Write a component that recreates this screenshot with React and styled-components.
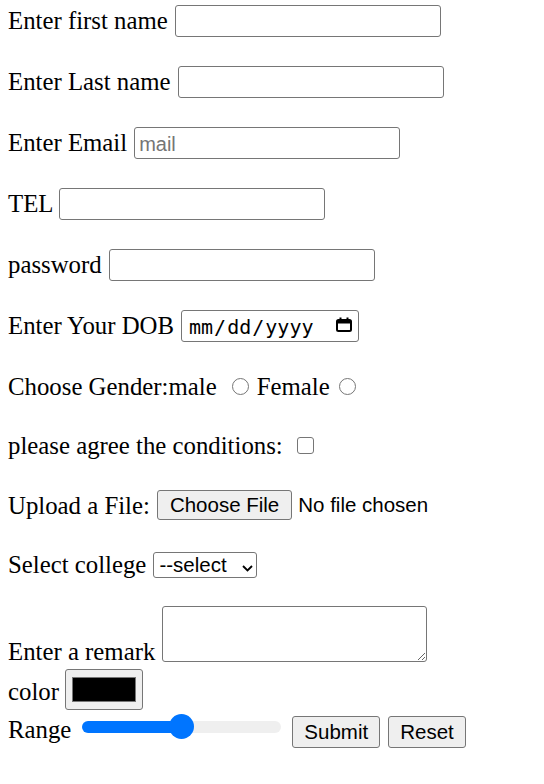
import React from 'react'
import styled, { createGlobalStyle } from 'styled-components'

const Page = createGlobalStyle`
  html, body {
    margin: 0;
    background: #fff;
  }
  body {
    font-family: "Liberation Serif", "Times New Roman", serif;
    color: #000;
  }
`

const Form = styled.form`
  display: flex;
  flex-direction: column;
  align-items: flex-start;
  padding: 5px 8px 0;
`

const Row = styled.div`
  display: flex;
  align-items: ${p => p.$align || 'baseline'};
  gap: ${p => p.$gap ?? 7}px;
  margin-top: ${p => p.$mt ?? 0}px;
`

const Label = styled.label`
  font-size: 24.8px;
  line-height: normal;
  white-space: nowrap;
  margin-bottom: ${p => p.$mb || 0}px;
`

const TextInput = styled.input`
  box-sizing: border-box;
  width: 266px;
  height: 32px;
  margin: 0;
  padding: 2px 4px 0;
  border: 1px solid #767676;
  border-radius: 3px;
  background: #fff;
  color: #000;
  font: 20px "Liberation Sans", Arial, sans-serif;
  outline: none;
  &::placeholder {
    color: #757575;
  }
`

const DateWrap = styled.div`
  position: relative;
  display: flex;
`

const DateInput = styled(TextInput)`
  width: 178px;
  padding: 2px 6px 0 6px;
  font-family: "DejaVu Sans Mono", "Liberation Mono", monospace;
  &::-webkit-calendar-picker-indicator {
    width: 16px;
    height: 16px;
    padding: 0;
    margin: 0;
    opacity: 0;
  }
`

const CalendarIcon = styled.svg`
  position: absolute;
  right: 7px;
  top: 7px;
  pointer-events: none;
`

const Radio = styled.input`
  appearance: none;
  box-sizing: border-box;
  align-self: flex-start;
  width: 17px;
  height: 17px;
  margin: 5px ${p => p.$mr || 0}px 0 ${p => p.$ml || 0}px;
  border: 1px solid #767676;
  border-radius: 50%;
  background: #fff;
`

const Checkbox = styled.input`
  appearance: none;
  box-sizing: border-box;
  align-self: flex-start;
  width: 17px;
  height: 17px;
  margin: 5px 0 0;
  border: 1px solid #767676;
  border-radius: 3px;
  background: #fff;
`

const FileInput = styled.input`
  align-self: flex-start;
  width: 290px;
  height: 30px;
  margin: -2px 0 0;
  padding: 0;
  color: #000;
  font: 20.5px "Liberation Sans", Arial, sans-serif;
  &::file-selector-button {
    box-sizing: border-box;
    height: 30px;
    margin: 0 6px 0 0;
    padding: 0 12px;
    border: 1px solid #767676;
    border-radius: 3px;
    background: #efefef;
    color: #000;
    font: inherit;
  }
`

const SelectWrap = styled.div`
  position: relative;
  align-self: flex-start;
  margin-top: 1px;
`

const Select = styled.select`
  appearance: none;
  box-sizing: border-box;
  width: 104px;
  height: 26px;
  margin: 0;
  padding: 0 22px 0 5px;
  border: 1px solid #767676;
  border-radius: 3px;
  background: #fff;
  color: #000;
  font: 20.5px "Liberation Sans", Arial, sans-serif;
`

const Chevron = styled.svg`
  position: absolute;
  right: 4px;
  top: 13px;
  pointer-events: none;
`

const TextArea = styled.textarea`
  box-sizing: border-box;
  width: 265px;
  height: 56px;
  margin: 0 0 4.4px;
  border: 1px solid #767676;
  border-radius: 3px;
  font: 20px "Liberation Mono", monospace;
`

const ColorInput = styled.input`
  box-sizing: border-box;
  width: 78px;
  height: 41px;
  margin: 0;
  padding: 0;
  border: 1px solid #767676;
  border-radius: 3px;
  background: #efefef;
  &::-webkit-color-swatch-wrapper {
    padding: 7px 6px;
  }
  &::-webkit-color-swatch {
    border: 1px solid #777;
    border-radius: 0;
  }
`

const Slider = styled.input`
  -webkit-appearance: none;
  appearance: none;
  width: 199px;
  height: 25px;
  margin: -2px 3px 0;
  background: transparent;
  &::-webkit-slider-runnable-track {
    height: 12px;
    border-radius: 6px;
    background: linear-gradient(to right, #0075ff ${p => p.$pct}%, #efefef ${p => p.$pct}%);
  }
  &::-webkit-slider-thumb {
    -webkit-appearance: none;
    width: 25px;
    height: 25px;
    margin-top: -6.5px;
    border: none;
    border-radius: 50%;
    background: #0075ff;
  }
`

const Button = styled.button`
  box-sizing: border-box;
  height: 32px;
  margin: 0;
  padding: 0 11px;
  border: 1px solid #767676;
  border-radius: 3px;
  background: #efefef;
  color: #000;
  font: 20.5px "Liberation Sans", Arial, sans-serif;
`

export default function App() {
  return (
    <>
      <Page />
      <Form>
        <Row>
          <Label htmlFor="fname">Enter first name</Label>
          <TextInput id="fname" type="text" />
        </Row>
        <Row $mt={29}>
          <Label htmlFor="lname">Enter Last name</Label>
          <TextInput id="lname" type="text" />
        </Row>
        <Row $mt={29}>
          <Label htmlFor="email">Enter Email</Label>
          <TextInput id="email" type="email" placeholder="mail" />
        </Row>
        <Row $mt={29} $gap={6}>
          <Label htmlFor="tel">TEL</Label>
          <TextInput id="tel" type="tel" />
        </Row>
        <Row $mt={29}>
          <Label htmlFor="pwd">password</Label>
          <TextInput id="pwd" type="password" />
        </Row>
        <Row $mt={29} $gap={7}>
          <Label htmlFor="dob">Enter Your DOB</Label>
          <DateWrap>
            <DateInput id="dob" type="date" />
            <CalendarIcon width="16" height="15" viewBox="0 0 16 15">
              <rect x="1" y="3" width="14" height="11" rx="1.5" fill="none" stroke="#000" strokeWidth="2" />
              <rect x="1" y="3" width="14" height="3.5" fill="#000" />
              <rect x="3.5" y="0.5" width="2" height="3" fill="#000" />
              <rect x="10.5" y="0.5" width="2" height="3" fill="#000" />
            </CalendarIcon>
          </DateWrap>
        </Row>
        <Row $mt={31} $gap={0}>
          <Label htmlFor="male">Choose Gender:male</Label>
          <Radio id="male" type="radio" name="gender" $ml={15.5} $mr={7.5} />
          <Label htmlFor="female">Female</Label>
          <Radio id="female" type="radio" name="gender" $ml={9} />
        </Row>
        <Row $mt={30.5} $gap={14}>
          <Label htmlFor="agree">please agree the conditions:</Label>
          <Checkbox id="agree" type="checkbox" />
        </Row>
        <Row $mt={32.5}>
          <Label htmlFor="file">Upload a File:</Label>
          <FileInput id="file" type="file" />
        </Row>
        <Row $mt={30.9}>
          <Label htmlFor="college">Select college</Label>
          <SelectWrap>
            <Select id="college" defaultValue="">
              <option value="">--select</option>
            </Select>
            <Chevron width="11" height="7" viewBox="0 0 11 7">
              <path d="M1 1l4.5 4.5L10 1" fill="none" stroke="#000" strokeWidth="1.8" />
            </Chevron>
          </SelectWrap>
        </Row>
        <Row $mt={26.65} $align="flex-end">
          <Label htmlFor="remark">Enter a remark</Label>
          <TextArea id="remark" />
        </Row>
        <Row $mt={2.6} $align="flex-end" $gap={6}>
          <Label htmlFor="color" $mb={3.6}>color</Label>
          <ColorInput id="color" type="color" defaultValue="#000000" />
        </Row>
        <Row $mt={6.9} $align="flex-start" $gap={8}>
          <Label htmlFor="range">Range</Label>
          <Slider id="range" type="range" defaultValue={50} $pct={50} />
          <Button type="submit">Submit</Button>
          <Button type="reset">Reset</Button>
        </Row>
      </Form>
    </>
  )
}
